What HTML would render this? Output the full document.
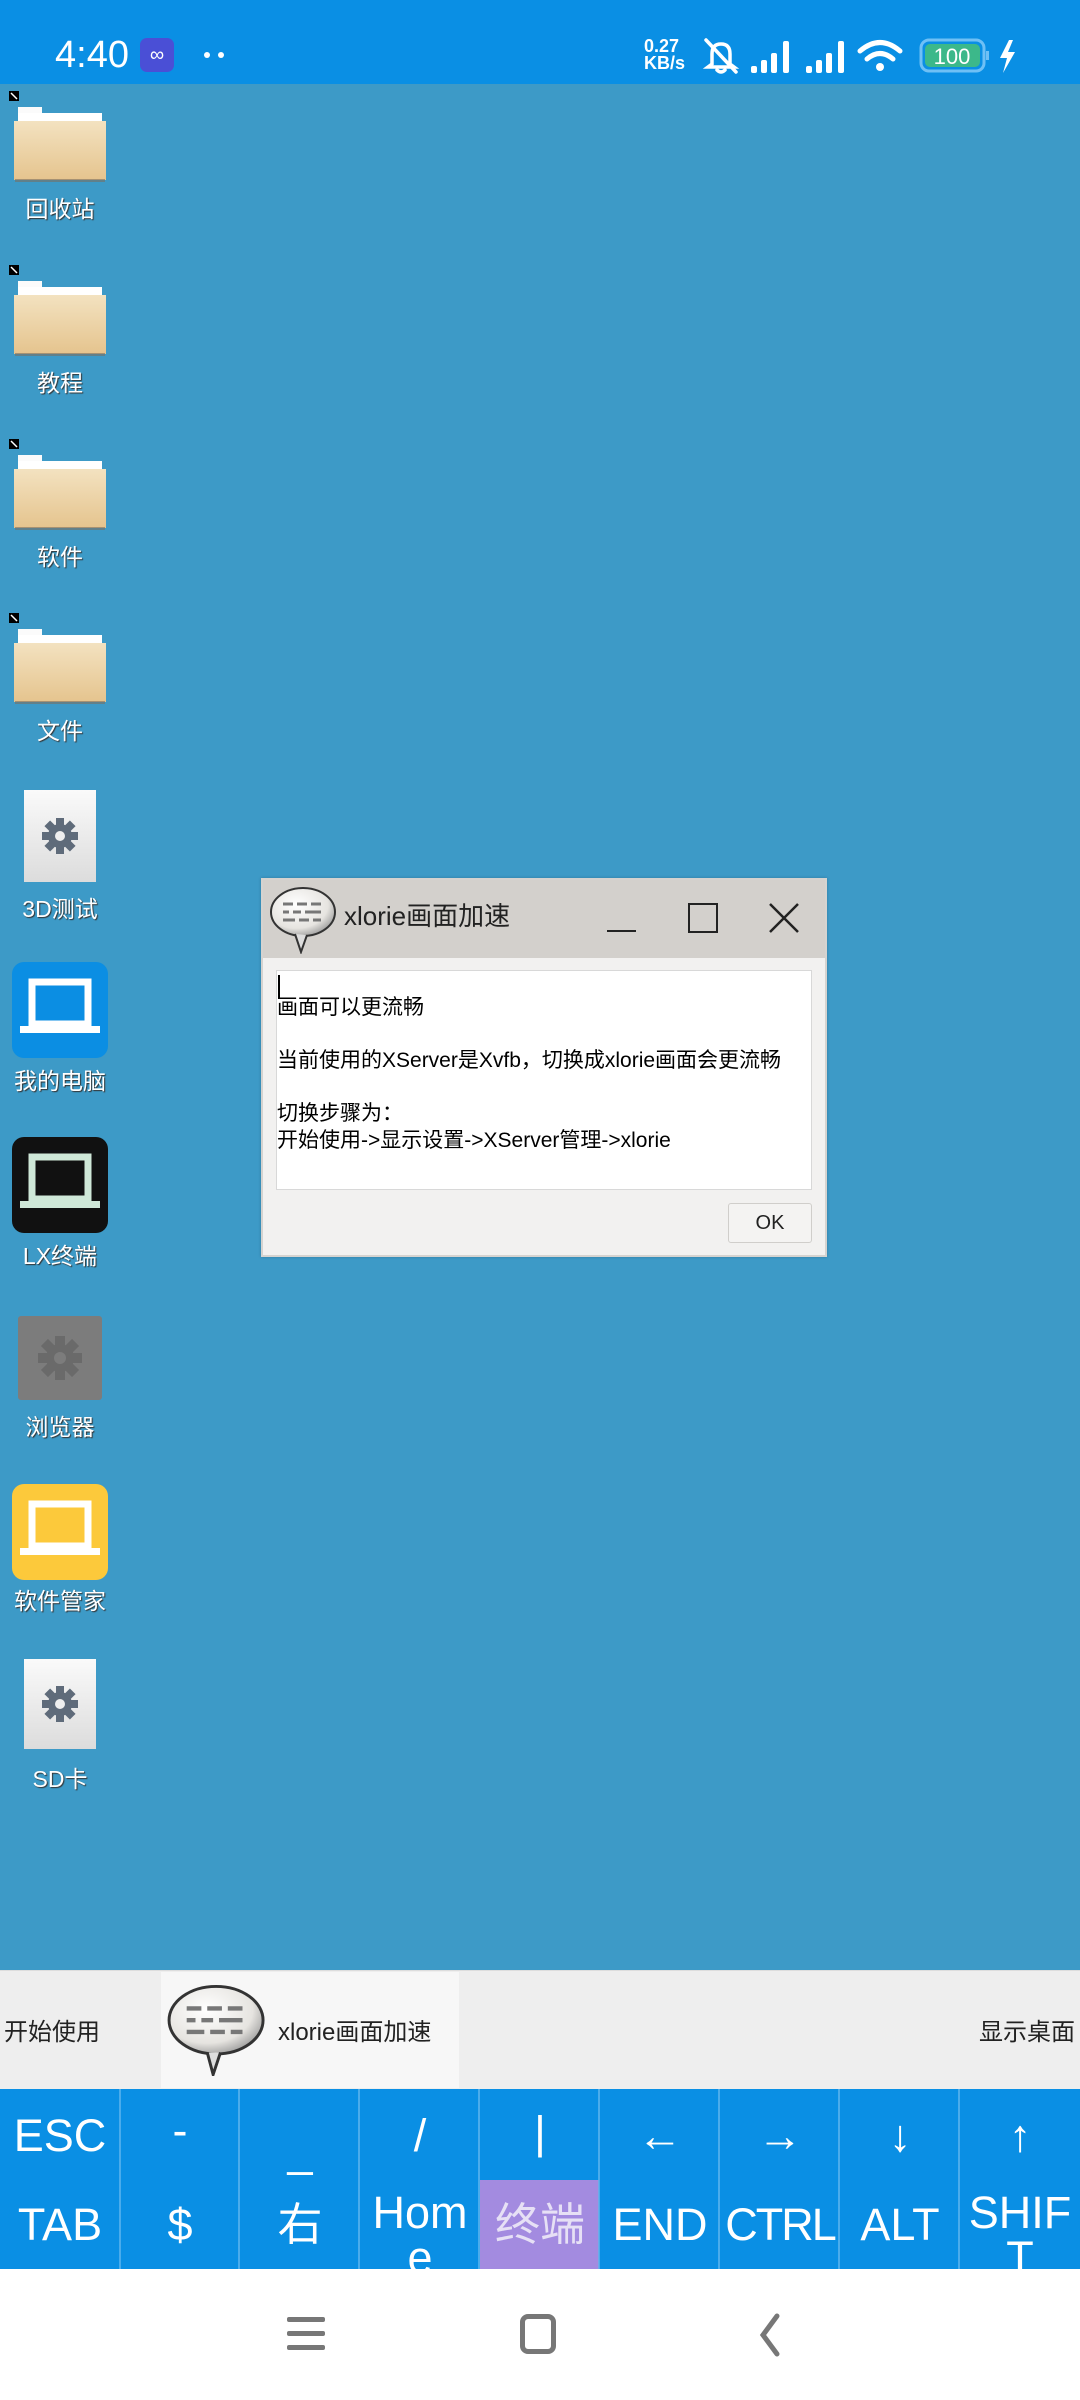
<!DOCTYPE html>
<html><head><meta charset="utf-8"><style>
*{margin:0;padding:0;box-sizing:border-box}
body{width:1080px;height:2400px;position:relative;overflow:hidden;background:#3d9ac7;font-family:"Liberation Sans","Noto Sans CJK SC",sans-serif}
.a{position:absolute}
.sb{left:0;top:0;width:1080px;height:84px;background:#0a8fe4}
.lbl{position:absolute;left:0;width:120px;text-align:center;color:#fff;font-size:23px;text-shadow:1px 1px 1px #333}
.fold{position:absolute;left:14px;width:92px;height:76px}
.key{position:absolute;width:120px;text-align:center;color:#fff;font-size:45px;line-height:1}
</style></head><body>
<div class="a sb"></div>
<div class="a" style="left:55px;top:36px;color:#fff;font-size:38px;line-height:1">4:40</div>
<div class="a" style="left:140px;top:38px;width:34px;height:34px;background:#4a4fd6;border-radius:7px;color:#fff;font-size:20px;text-align:center;line-height:34px">∞</div>
<div class="a" style="left:204px;top:52px;width:6px;height:6px;border-radius:3px;background:#fff"></div>
<div class="a" style="left:218px;top:52px;width:6px;height:6px;border-radius:3px;background:#fff"></div>
<div class="a" style="left:644px;top:38px;color:#fff;font-size:18px;font-weight:bold;line-height:17px">0.27<br>KB/s</div>
<svg class="a" style="left:700px;top:36px" width="340" height="40" viewBox="0 0 340 40">
<g fill="none" stroke="#fff" stroke-width="3.5" stroke-linecap="round">
<path d="M12 28 L12 18 Q12 8 21 8 Q30 8 30 18 L30 28 L34 31 L8 31 Z M17 34 Q21 38 25 34"/><path d="M6 4 L36 36"/>
</g>
<g fill="#fff"><rect x="51" y="30" width="6" height="7" rx="2"/><rect x="61" y="24" width="6" height="13" rx="2"/><rect x="71" y="17" width="6" height="20" rx="2"/><rect x="83" y="5" width="6" height="32" rx="2"/>
<rect x="106" y="30" width="6" height="7" rx="2"/><rect x="116" y="24" width="6" height="13" rx="2"/><rect x="126" y="17" width="6" height="20" rx="2"/><rect x="138" y="5" width="6" height="32" rx="2"/></g>
<g fill="none" stroke="#fff" stroke-width="5" stroke-linecap="round"><path d="M160 15 Q180 -2 200 15"/><path d="M167 23 Q180 12 193 23"/></g><circle cx="180" cy="31" r="4" fill="#fff"/>
<rect x="221" y="4" width="63" height="31" rx="8" fill="none" stroke="#6fc0f5" stroke-width="3"/><rect x="225" y="8" width="55" height="23" rx="5" fill="#3cb88a"/>
<text x="252" y="28" fill="#fff" font-size="22" text-anchor="middle" font-family="Liberation Sans">100</text>
<rect x="286" y="15" width="3" height="9" fill="#6fc0f5"/>
<path d="M309 4 L300 22 L307 22 L303 37 L315 16 L308 16 L313 4 Z" fill="#fff"/>
</svg>

<svg class="a" style="left:8px;top:90px" width="12" height="12"><rect x="1" y="1" width="10" height="10" fill="#000"/><path d="M3 3 L9 9" stroke="#fff" stroke-width="1.5"/></svg>
<svg class="a" style="left:8px;top:264px" width="12" height="12"><rect x="1" y="1" width="10" height="10" fill="#000"/><path d="M3 3 L9 9" stroke="#fff" stroke-width="1.5"/></svg>
<svg class="a" style="left:8px;top:438px" width="12" height="12"><rect x="1" y="1" width="10" height="10" fill="#000"/><path d="M3 3 L9 9" stroke="#fff" stroke-width="1.5"/></svg>
<svg class="a" style="left:8px;top:612px" width="12" height="12"><rect x="1" y="1" width="10" height="10" fill="#000"/><path d="M3 3 L9 9" stroke="#fff" stroke-width="1.5"/></svg>
<svg width="0" height="0"><defs><linearGradient id="fg" x1="0" y1="0" x2="0" y2="1"><stop offset="0" stop-color="#f3e2c0"/><stop offset="1" stop-color="#e5c48e"/></linearGradient><linearGradient id="gg" x1="0" y1="0" x2="0" y2="1"><stop offset="0" stop-color="#fafafa"/><stop offset="1" stop-color="#dcdcdc"/></linearGradient><radialGradient id="bb" cx="0.4" cy="0.35" r="0.7"><stop offset="0" stop-color="#fff"/><stop offset="0.7" stop-color="#e6e4e0"/><stop offset="1" stop-color="#999"/></radialGradient></defs></svg>
<svg class="fold" style="top:107px" viewBox="0 0 92 76" preserveAspectRatio="none"><rect x="4" y="0" width="24" height="10" fill="#fbfbfb"/><rect x="4" y="6" width="84" height="10" fill="#fff"/><rect x="0" y="14" width="92" height="59" fill="url(#fg)"/><rect x="1" y="72" width="90" height="3" fill="#7a7060" opacity=".6"/></svg>
<svg class="fold" style="top:281px" viewBox="0 0 92 76" preserveAspectRatio="none"><rect x="4" y="0" width="24" height="10" fill="#fbfbfb"/><rect x="4" y="6" width="84" height="10" fill="#fff"/><rect x="0" y="14" width="92" height="59" fill="url(#fg)"/><rect x="1" y="72" width="90" height="3" fill="#7a7060" opacity=".6"/></svg>
<svg class="fold" style="top:455px" viewBox="0 0 92 76" preserveAspectRatio="none"><rect x="4" y="0" width="24" height="10" fill="#fbfbfb"/><rect x="4" y="6" width="84" height="10" fill="#fff"/><rect x="0" y="14" width="92" height="59" fill="url(#fg)"/><rect x="1" y="72" width="90" height="3" fill="#7a7060" opacity=".6"/></svg>
<svg class="fold" style="top:629px" viewBox="0 0 92 76" preserveAspectRatio="none"><rect x="4" y="0" width="24" height="10" fill="#fbfbfb"/><rect x="4" y="6" width="84" height="10" fill="#fff"/><rect x="0" y="14" width="92" height="59" fill="url(#fg)"/><rect x="1" y="72" width="90" height="3" fill="#7a7060" opacity=".6"/></svg>
<div class="lbl" style="top:190px">回收站</div>
<div class="lbl" style="top:364px">教程</div>
<div class="lbl" style="top:538px">软件</div>
<div class="lbl" style="top:712px">文件</div>

<svg class="a" style="left:24px;top:790px" width="72" height="92" viewBox="0 0 72 92"><rect width="72" height="92" fill="url(#gg)"/><g transform="translate(36 46)" fill="#5f6b7a"><circle r="12"/><rect x="-4" y="-18" width="8" height="8"/><rect x="-4" y="10" width="8" height="8"/><rect x="-18" y="-4" width="8" height="8"/><rect x="10" y="-4" width="8" height="8"/><g transform="rotate(45)"><rect x="-4" y="-18" width="8" height="8"/><rect x="-4" y="10" width="8" height="8"/><rect x="-18" y="-4" width="8" height="8"/><rect x="10" y="-4" width="8" height="8"/></g><circle r="5" fill="#eee"/></g></svg>
<div class="lbl" style="top:890px">3D测试</div>
<svg class="a" style="left:12px;top:962px" width="96" height="96" viewBox="0 0 96 96"><rect width="96" height="96" rx="12" fill="#0b8ee3"/><rect x="20" y="20" width="56" height="42" fill="none" stroke="#fff" stroke-width="7"/><rect x="8" y="64" width="80" height="7" fill="#fff"/></svg>
<div class="lbl" style="top:1062px">我的电脑</div>
<svg class="a" style="left:12px;top:1137px" width="96" height="96" viewBox="0 0 96 96"><rect width="96" height="96" rx="12" fill="#111"/><rect x="20" y="20" width="56" height="42" fill="none" stroke="#cfe8d8" stroke-width="7"/><rect x="8" y="64" width="80" height="7" fill="#cfe8d8"/></svg>
<div class="lbl" style="top:1237px">LX终端</div>
<svg class="a" style="left:18px;top:1316px" width="84" height="84" viewBox="0 0 84 84"><rect width="84" height="84" rx="3" fill="#7c7c7c"/><g transform="translate(42 42)" fill="#6a6a6a"><circle r="14"/><rect x="-5" y="-22" width="10" height="10"/><rect x="-5" y="12" width="10" height="10"/><rect x="-22" y="-5" width="10" height="10"/><rect x="12" y="-5" width="10" height="10"/><g transform="rotate(45)"><rect x="-5" y="-22" width="10" height="10"/><rect x="-5" y="12" width="10" height="10"/><rect x="-22" y="-5" width="10" height="10"/><rect x="12" y="-5" width="10" height="10"/></g><circle r="6" fill="#7c7c7c"/></g></svg>
<div class="lbl" style="top:1408px">浏览器</div>
<svg class="a" style="left:12px;top:1484px" width="96" height="96" viewBox="0 0 96 96"><rect width="96" height="96" rx="12" fill="#fcc93b"/><rect x="20" y="20" width="56" height="42" fill="none" stroke="#fff" stroke-width="7"/><rect x="8" y="64" width="80" height="7" fill="#fff"/></svg>
<div class="lbl" style="top:1582px">软件管家</div>
<svg class="a" style="left:24px;top:1659px" width="72" height="90" viewBox="0 0 72 90"><rect width="72" height="90" fill="url(#gg)"/><g transform="translate(36 45)" fill="#5f6b7a"><circle r="12"/><rect x="-4" y="-18" width="8" height="8"/><rect x="-4" y="10" width="8" height="8"/><rect x="-18" y="-4" width="8" height="8"/><rect x="10" y="-4" width="8" height="8"/><g transform="rotate(45)"><rect x="-4" y="-18" width="8" height="8"/><rect x="-4" y="10" width="8" height="8"/><rect x="-18" y="-4" width="8" height="8"/><rect x="10" y="-4" width="8" height="8"/></g><circle r="5" fill="#eee"/></g></svg>
<div class="lbl" style="top:1760px">SD卡</div>

<div class="a" style="left:261px;top:878px;width:566px;height:379px;background:#f2f1f0;border:2px solid #d5d3d0;box-shadow:0 0 3px rgba(0,0,0,.2)"></div>
<div class="a" style="left:263px;top:880px;width:562px;height:78px;background:#d3d0cc"></div>
<svg class="a" style="left:269px;top:884px" width="72" height="70" viewBox="0 0 72 70"><ellipse cx="34" cy="28" rx="32" ry="24" fill="url(#bb)" stroke="#333" stroke-width="2"/><path d="M26 50 L32 68 L38 51" fill="#ddd" stroke="#333" stroke-width="2"/><g stroke="#777" stroke-width="3"><path d="M14 20h10M28 20h10M42 20h10M14 28h6M24 28h8M36 28h16M14 36h12M30 36h10M44 36h8"/></g></svg>
<div class="a" style="left:344px;top:903px;font-size:26px;color:#222;line-height:1">xlorie画面加速</div>
<div class="a" style="left:607px;top:930px;width:29px;height:2px;background:#222"></div>
<div class="a" style="left:688px;top:903px;width:30px;height:30px;border:2px solid #222"></div>
<svg class="a" style="left:766px;top:900px" width="36" height="36"><path d="M4 4 L32 32 M32 4 L4 32" stroke="#222" stroke-width="2.5"/></svg>
<div class="a" style="left:276px;top:970px;width:536px;height:220px;background:#fff;border:1px solid #d8d8d8"></div>
<div class="a" style="left:278px;top:975px;width:2px;height:24px;background:#000"></div>
<div class="a" style="left:277px;top:995px;font-size:21px;color:#000;line-height:26.5px;white-space:pre">画面可以更流畅

当前使用的XServer是Xvfb，切换成xlorie画面会更流畅

切换步骤为：
开始使用->显示设置->XServer管理->xlorie</div>
<div class="a" style="left:728px;top:1203px;width:84px;height:40px;background:#f4f3f2;border:1px solid #d0cecb;border-radius:3px;text-align:center;line-height:38px;font-size:20px;color:#222">OK</div>

<div class="a" style="left:0;top:1970px;width:1080px;height:119px;background:#eeeeee;border-top:1px solid #ddd"></div>
<div class="a" style="left:161px;top:1972px;width:298px;height:116px;background:#f7f7f7"></div>
<div class="a" style="left:4px;top:2012px;font-size:24px;color:#222">开始使用</div>
<svg class="a" style="left:166px;top:1982px" width="106" height="94" viewBox="0 0 72 64"><ellipse cx="34" cy="26" rx="32" ry="23" fill="url(#bb)" stroke="#333" stroke-width="2"/><path d="M28 48 L32 63 L37 48" fill="#ddd" stroke="#333" stroke-width="2"/><g stroke="#777" stroke-width="3"><path d="M14 18h10M28 18h10M42 18h10M14 26h6M24 26h8M36 26h16M14 34h12M30 34h10M44 34h8"/></g></svg>
<div class="a" style="left:278px;top:2012px;font-size:24px;color:#222">xlorie画面加速</div>
<div class="a" style="right:5px;top:2012px;font-size:24px;color:#222">显示桌面</div>

<div class="a" style="left:0;top:2089px;width:1080px;height:180px;background:#0a8fe4"></div>
<div class="a" style="left:480px;top:2180px;width:119px;height:89px;background:#a38be0"></div>
<svg class="a" style="left:0;top:2089px" width="1080" height="180"><g stroke="#5fb5ee" stroke-width="1.5"><path d="M120 0v180M239 0v180M359 0v180M479 0v180M599 0v180M719 0v180M839 0v180M959 0v180"/></g></svg>
<div class="key" style="left:0;top:2113px">ESC</div>
<div class="key" style="left:120px;top:2108px">-</div>
<div class="key" style="left:240px;top:2128px">_</div>
<div class="key" style="left:360px;top:2113px">/</div>
<div class="key" style="left:480px;top:2110px">|</div>
<div class="key" style="left:600px;top:2113px">←</div>
<div class="key" style="left:720px;top:2113px">→</div>
<div class="key" style="left:840px;top:2113px">↓</div>
<div class="key" style="left:960px;top:2113px">↑</div>
<div class="key" style="left:0;top:2202px">TAB</div>
<div class="key" style="left:120px;top:2202px">$</div>
<div class="key" style="left:240px;top:2202px">右</div>
<div class="key" style="left:360px;top:2190px;height:79px;overflow:hidden">Hom<br>e</div>
<div class="key" style="left:480px;top:2202px;color:#e6e0f5">终端</div>
<div class="key" style="left:600px;top:2202px">END</div>
<div class="key" style="left:720px;top:2202px;letter-spacing:-2px">CTRL</div>
<div class="key" style="left:840px;top:2202px">ALT</div>
<div class="key" style="left:960px;top:2190px;height:79px;overflow:hidden">SHIF<br>T</div>

<div class="a" style="left:0;top:2269px;width:1080px;height:131px;background:#fff"></div>
<div class="a" style="left:287px;top:2317px;width:38px;height:5px;background:#777;border-radius:2px"></div>
<div class="a" style="left:287px;top:2331px;width:38px;height:5px;background:#777;border-radius:2px"></div>
<div class="a" style="left:287px;top:2345px;width:38px;height:5px;background:#777;border-radius:2px"></div>
<div class="a" style="left:520px;top:2314px;width:36px;height:40px;border:5px solid #777;border-radius:8px"></div>
<svg class="a" style="left:755px;top:2312px" width="30" height="46"><path d="M22 4 L8 23 L22 42" fill="none" stroke="#777" stroke-width="5" stroke-linecap="round"/></svg>
</body></html>
